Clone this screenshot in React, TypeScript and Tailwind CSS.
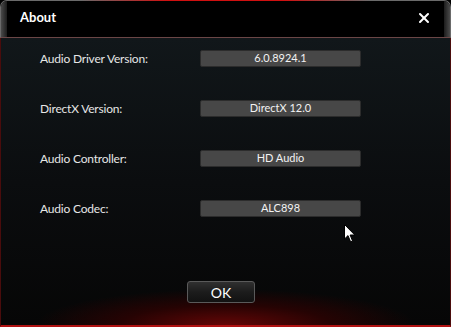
import { X } from 'lucide-react'

const rows = [
  { label: 'Audio Driver Version:', value: '6.0.8924.1' },
  { label: 'DirectX Version:', value: 'DirectX 12.0' },
  { label: 'Audio Controller:', value: 'HD Audio' },
  { label: 'Audio Codec:', value: 'ALC898' },
]

function Cursor() {
  return (
    <svg className="absolute left-[343px] top-[186px]" width="12" height="19" viewBox="0 0 12 19">
      <path d="M0.5 0.5 L0.5 15 L4 11.6 L6.6 17.8 L8.6 17 L6.1 11 L10.8 11 Z" fill="#fff" stroke="#000" strokeWidth="1" />
    </svg>
  )
}

export default function App() {
  return (
    <div className="w-[451px] h-[327px] bg-black flex flex-col overflow-hidden font-['Lato','Liberation_Sans',sans-serif] select-none">
      {/* title bar */}
      <div className="relative h-[38px] flex rounded-t-[7px] border-t border-x border-[#6a6a6a] bg-black border-b border-b-[#6b4646]">
        <div className="absolute left-[80px] right-[80px] top-[-1px] h-px bg-[linear-gradient(90deg,transparent,#d01010_30%,#d01010_70%,transparent)]" />
        <div className="w-[6px] rounded-tl-[6px] bg-[linear-gradient(90deg,#4a4a4a,#1c1c1c)]" />
        <div className="flex-1 flex items-center justify-between pl-[13px] pr-[12px] pb-[2px]">
          <span className="text-white text-[13px] font-bold">About</span>
          <X className="text-white" size={16} strokeWidth={3} />
        </div>
        <div className="w-[6px] rounded-tr-[6px] bg-[linear-gradient(270deg,#4a4a4a,#1c1c1c)]" />
      </div>

      {/* body */}
      <div className="relative flex-1 flex flex-col border-x border-[#4a0c0c] border-b-2 border-b-[#b01212] bg-[radial-gradient(ellipse_190px_36px_at_50%_100%,#640606,#260303_55%,transparent_100%),linear-gradient(180deg,#11171a,#0b0d0f_50%,#060606)]">
        <div className="flex flex-col gap-[33px] pt-[12px] pl-[39px]">
          {rows.map((r) => (
            <div key={r.label} className="flex items-center h-[17px]">
              <div className="w-[160px] text-[#e6e6e6] text-[12px] tracking-[-0.2px]">{r.label}</div>
              <div className="w-[161px] h-[17px] rounded-[2px] border border-[#2c2c2c] bg-[#474747] flex items-center justify-center text-[#f2f2f2] text-[11px]">
                {r.value}
              </div>
            </div>
          ))}
        </div>
        <div className="mt-auto mb-[22px] pl-[186px] flex">
          <button className="w-[68px] h-[22px] rounded-[3px] border border-[#5a5a5a] bg-[linear-gradient(180deg,#303030,#1c1c1c_50%,#121212)] text-white text-[14px] flex items-center justify-center">
            OK
          </button>
        </div>
        <Cursor />
      </div>
    </div>
  )
}
